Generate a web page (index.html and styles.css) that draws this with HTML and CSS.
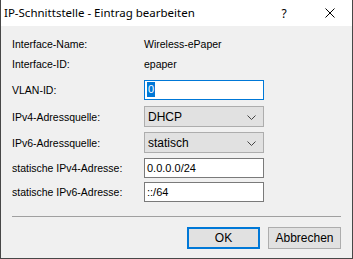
FILE: index.html
```html
<!DOCTYPE html>
<html lang="de">
<head>
    <meta charset="UTF-8">
    <title>IP-Schnittstelle - Eintrag bearbeiten</title>
    <link rel="stylesheet" href="styles.css">
</head>
<body>
    <div class="window">
        <div class="titlebar">
            <span class="title">IP-Schnittstelle - Eintrag bearbeiten</span>
            <span class="tb-btn help">?</span>
            <span class="tb-btn close">
                <svg width="10" height="10" viewBox="0 0 10 10"><path d="M0.5 0.5L9.5 9.5M9.5 0.5L0.5 9.5" stroke="#000" stroke-width="1" fill="none"/></svg>
            </span>
        </div>

        <div class="content">
            <div class="info">
                <div class="row info-row">
                    <span class="label">Interface-Name:</span>
                    <span class="value">Wireless-ePaper</span>
                </div>
                <div class="row info-row">
                    <span class="label">Interface-ID:</span>
                    <span class="value">epaper</span>
                </div>
            </div>

            <div class="form">
                <div class="row r-vlan">
                    <span class="label">VLAN-ID:</span>
                    <div class="field focused"><span class="sel">0</span></div>
                </div>
                <div class="row r-v4src">
                    <span class="label">IPv4-Adressquelle:</span>
                    <div class="combo">
                        <span>DHCP</span>
                        <svg class="chev" width="9" height="5" viewBox="0 0 9 5"><path d="M0.5 0.5L4.5 4.5L8.5 0.5" stroke="#444" fill="none"/></svg>
                    </div>
                </div>
                <div class="row r-v6src">
                    <span class="label">IPv6-Adressquelle:</span>
                    <div class="combo">
                        <span>statisch</span>
                        <svg class="chev" width="9" height="5" viewBox="0 0 9 5"><path d="M0.5 0.5L4.5 4.5L8.5 0.5" stroke="#444" fill="none"/></svg>
                    </div>
                </div>
                <div class="row r-v4">
                    <span class="label">statische IPv4-Adresse:</span>
                    <div class="field">0.0.0.0/24</div>
                </div>
                <div class="row r-v6">
                    <span class="label">statische IPv6-Adresse:</span>
                    <div class="field">::/64</div>
                </div>
            </div>

            <div class="separator"></div>

            <div class="buttons">
                <button class="btn default">OK</button>
                <button class="btn">Abbrechen</button>
            </div>
        </div>
    </div>
</body>
</html>
```

FILE: styles.css
```css
* { box-sizing: border-box; }
body {
    margin: 0;
    font-family: 'Liberation Sans', Arial, sans-serif;
    font-size: 10.5px;
    color: #000;
    background: #f0f0f0;
}
.window {
    width: 353px;
    height: 259px;
    display: flex;
    flex-direction: column;
    background: #f0f0f0;
    border: 1px solid #474747;
    border-top: none;
}
.titlebar {
    height: 26px;
    background: #fff;
    display: flex;
    align-items: center;
    flex-shrink: 0;
}
.title {
    flex: 1;
    padding-left: 3px;
    font-family: 'Noto Sans', sans-serif;
    font-size: 11.5px;
    padding-bottom: 2px;
}
.tb-btn {
    width: 46px;
    height: 26px;
    display: flex;
    align-items: center;
    justify-content: center;
}
.help {
    font-family: 'Noto Sans', sans-serif;
    font-size: 12px;
}
.close { width: 45px; }
.content {
    padding: 0 11px 0 11px;
    flex: 1;
}
.info { padding-top: 8px; }
.row {
    display: grid;
    grid-template-columns: 132px 120px;
    align-items: center;
}
.info-row { height: 19px; }
.info-row + .info-row { margin-top: 1px; }
.form { margin-top: 7px; }
.field {
    height: 20px;
    background: #fff;
    border: 1px solid #7a7a7a;
    padding: 0 0 0 2px;
    line-height: 18px;
    font-size: 11px;
}
.field.focused { border-color: #0078d7; }
.sel {
    display: inline-block;
    background: #0078d7;
    color: #fff;
    line-height: 15px;
    padding: 0 1px;
    margin-top: 1px;
    vertical-align: top;
}
.combo {
    height: 21px;
    background: #e1e1e1;
    border: 1px solid #adadad;
    display: flex;
    align-items: center;
    justify-content: space-between;
    padding: 0 7px 0 3px;
}
.combo span { font-size: 12px; }
.chev { margin-top: 1px; }
.r-v4src { margin-top: 6px; }
.r-v6src { margin-top: 5px; }
.r-v4 { margin-top: 5px; }
.r-v6 { margin-top: 4px; }
.separator {
    height: 1px;
    background: #a0a0a0;
    margin-top: 14px;
}
.buttons {
    display: flex;
    justify-content: flex-end;
    gap: 8px;
    margin-top: 10px;
}
.btn {
    width: 73px;
    height: 22px;
    font-family: 'Liberation Sans', Arial, sans-serif;
    font-size: 12px;
    background: #e1e1e1;
    border: 1px solid #adadad;
    padding: 0;
    color: #000;
}
.btn.default { border: 2px solid #0078d7; }
```
